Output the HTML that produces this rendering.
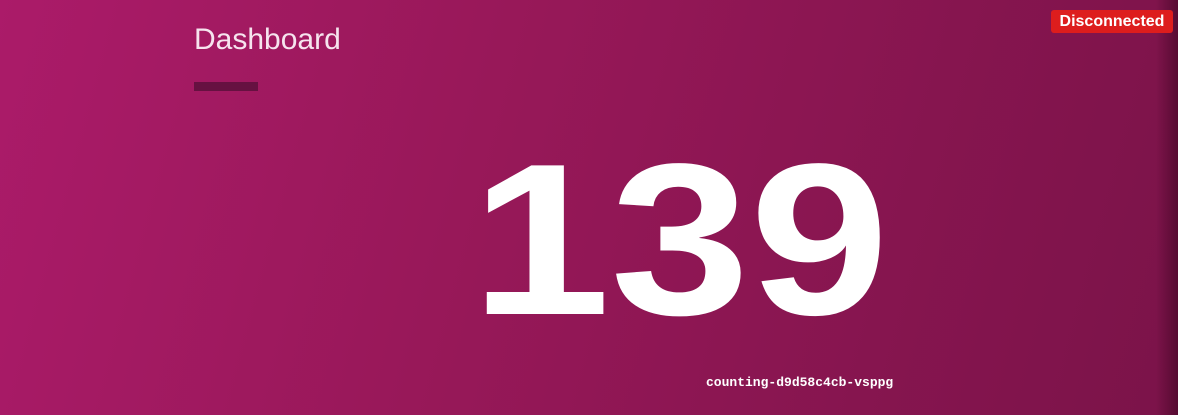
<!DOCTYPE html>
<html><head><style>
body{margin:0;width:1178px;height:415px;overflow:hidden;position:relative;font-family:"Liberation Sans",sans-serif;
background:linear-gradient(105deg,#ab1b69 0%,#981859 40%,#86154f 75%,#7b1349 100%);}
.shadow{position:absolute;right:0;top:0;width:22px;height:415px;background:linear-gradient(90deg,rgba(0,0,0,0),rgba(40,0,20,0.45));}
.title{position:absolute;left:194px;top:23px;font-size:30px;color:#f6e4ee;}
.bar{position:absolute;left:194px;top:82px;width:64px;height:9px;background:#661141;}
.num{position:absolute;left:478px;top:131px;font-size:216px;font-weight:bold;color:#fff;line-height:1;transform:scaleX(1.16);transform-origin:0 0;margin-left:-7px;}
.pod{position:absolute;left:706px;top:375px;font-family:"Liberation Mono",monospace;font-weight:bold;font-size:13px;color:#fff;}
.disc{position:absolute;left:1051px;top:10px;width:122px;height:23px;background:#dd1d1d;border-radius:3px;color:#fff;font-weight:bold;font-size:16px;line-height:23px;text-align:center;}
</style></head><body>
<div class="shadow"></div>
<div class="title">Dashboard</div>
<div class="bar"></div>
<div class="num">139</div>
<div class="pod">counting-d9d58c4cb-vsppg</div>
<div class="disc">Disconnected</div>
</body></html>
